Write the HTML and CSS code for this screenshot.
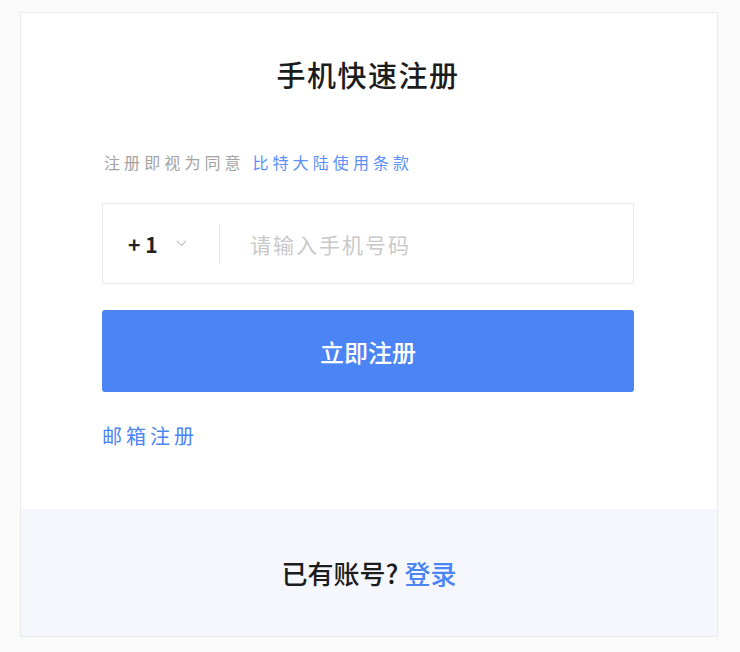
FILE: index.html
```html
<!DOCTYPE html>
<html lang="zh-CN">
<head>
  <meta charset="UTF-8" />
  <title>手机快速注册</title>
  <link rel="stylesheet" href="styles.css">
</head>
<body>

  <div class="card">
    <div class="card-body">
      <h1 class="title">手机快速注册</h1>

      <p class="agree">注册即视为同意 <a href="#" class="link">比特大陆使用条款</a></p>

      <div class="phone-field">
        <div class="code">
          <span>+ 1</span>
          <svg class="chevron" width="11" height="7" viewBox="0 0 11 7">
            <path d="M1 1 L5.5 5.5 L10 1" fill="none" stroke="#c4c4c4" stroke-width="1.2" />
          </svg>
        </div>
        <span class="divider"></span>
        <input class="phone-input" type="text" placeholder="请输入手机号码" />
      </div>

      <button class="submit">立即注册</button>

      <a href="#" class="email-link">邮箱注册</a>
    </div>

    <div class="card-footer">
      已有账号? <a href="#" class="login">登录</a>
    </div>
  </div>

</body>
</html>
```

FILE: styles.css
```css
body {
  margin: 0;
  padding: 12px 22px 15px 20px;
  background: #fafafa;
  font-family: "Noto Sans CJK SC", "Noto Sans", sans-serif;
  color: #222;
}
.card {
  background: #fff;
  border: 1px solid #ebebeb;
  height: 623px;
  display: flex;
  flex-direction: column;
}
.card-body {
  flex: 1;
  padding: 39px 83px 0 81px;
}
.title {
  margin: 0;
  text-align: center;
  font-size: 29px;
  font-weight: 500;
  line-height: 44px;
  letter-spacing: 1.5px;
  color: #1c1c1c;
}
.agree {
  margin: 54px 0 0 2px;
  font-size: 16px;
  line-height: 24px;
  letter-spacing: 4.1px;
  color: #a3a3a3;
}
.link {
  color: #5b8ff9;
  text-decoration: none;
}
.phone-field {
  margin-top: 29px;
  height: 79px;
  border: 1px solid #e8e8e8;
  display: flex;
  align-items: center;
}
.code {
  display: flex;
  align-items: center;
  gap: 18px;
  padding-left: 25px;
  width: 91px;
  font-size: 21px;
  font-weight: 700;
  color: #222;
}
.divider {
  width: 1px;
  height: 40px;
  background: #e6e6e6;
}
.phone-input {
  flex: 1;
  border: none;
  outline: none;
  margin-left: 28px;
  font-family: inherit;
  font-size: 21px;
  letter-spacing: 2px;
  color: #222;
  background: transparent;
}
.phone-input::placeholder {
  color: #c9c9c9;
}
.submit {
  display: block;
  width: 100%;
  height: 82px;
  margin-top: 26px;
  border: none;
  border-radius: 3px;
  background: #4a84f5;
  color: #fff;
  font-family: inherit;
  font-size: 24px;
  font-weight: 500;
}
.email-link {
  display: inline-block;
  margin-top: 29px;
  font-size: 20px;
  line-height: 30px;
  letter-spacing: 4px;
  color: #4a84f5;
  text-decoration: none;
}
.card-footer {
  height: 127px;
  background: #f5f7fc;
  display: flex;
  align-items: center;
  justify-content: center;
  font-size: 26px;
  font-weight: 500;
  color: #1c1c1c;
}
.login {
  margin-left: 6px;
  color: #4a84f5;
  text-decoration: none;
}
```
